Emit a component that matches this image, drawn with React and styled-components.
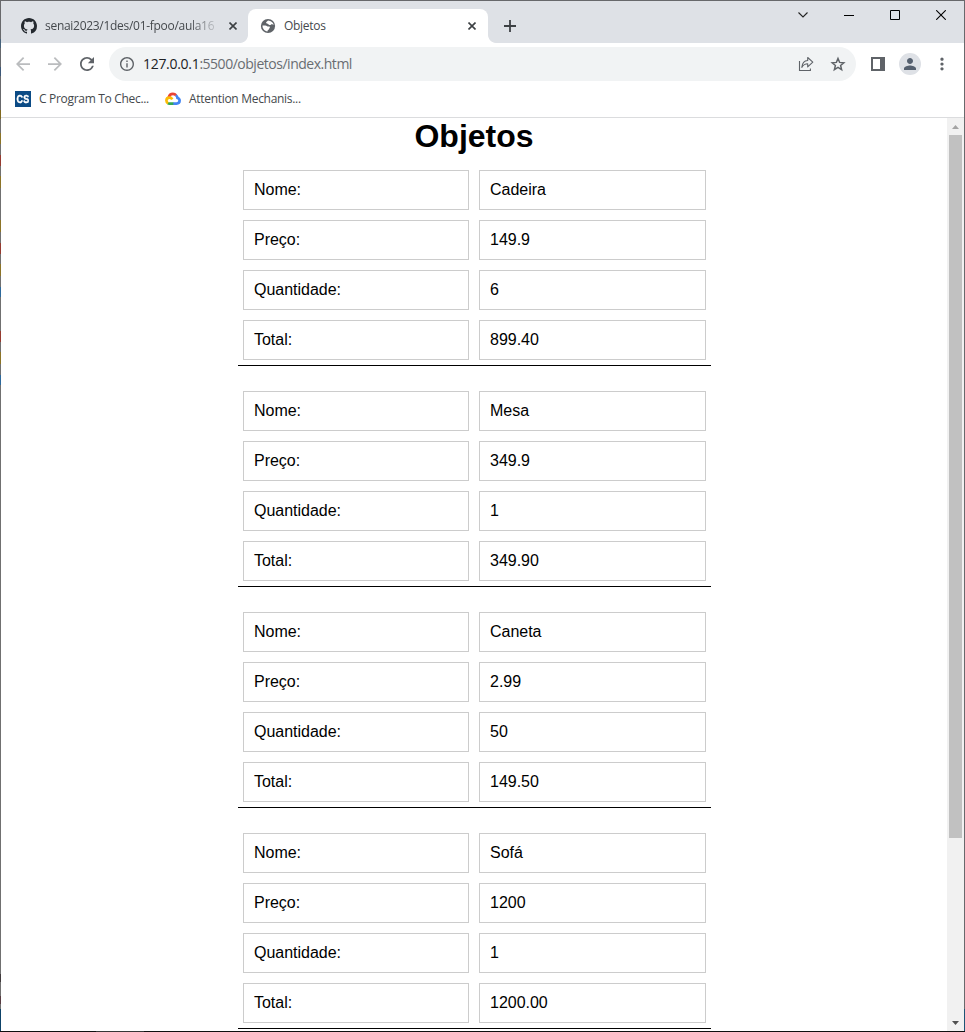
import React from "react";
import styled, { createGlobalStyle, css } from "styled-components";
import {
  MdArrowBack,
  MdArrowForward,
  MdInfoOutline,
  MdMoreVert,
  MdPerson,
  MdRefresh,
} from "react-icons/md";

const GlobalStyle = createGlobalStyle`
  * { box-sizing: border-box; }
  body { margin: 0; background: #fff; overflow: hidden; }
`;

const uiFont = css`
  font-family: "Open Sans", "Noto Sans", sans-serif;
  font-size: 12px;
  line-height: 16px;
  white-space: nowrap;
`;

const Desktop = styled.div`
  display: grid;
  grid-template-columns: 1px 1fr 1px;
  grid-template-rows: 1px 1fr 1px;
  width: 965px;
  height: 1032px;
`;

const EdgeTop = styled.div`
  grid-column: 1 / 4;
  background: #67686b;
`;

const EdgeLeft = styled.div`
  background: linear-gradient(
    #68696c 0 38px, #45617a 38px 47px, #68696c 47px 66px, #3c5878 66px 75px,
    #68696c 75px 109px, #80691f 109px 118px, #707070 118px 132px,
    #8c7427 132px 143px, #707070 143px 154px, #963b30 154px 165px,
    #707070 165px 175px, #8c7427 175px 187px, #707070 187px 219px,
    #8c7427 219px 231px, #707070 231px 242px, #963b30 242px 253px,
    #707070 253px 263px, #8c7427 263px 275px, #707070 275px 286px,
    #2d699c 286px 296px, #707070 296px 330px, #963b30 330px 341px,
    #707070 341px 351px, #8c7427 351px 363px, #707070 363px 374px,
    #2d699c 374px 384px, #707070 384px 973px, #403a3c 973px 981px,
    #707070 981px 995px, #583c42 995px 1003px, #707070 1003px 1008px,
    #0d4268 1008px 1031px
  );
`;

const EdgeRight = styled.div`
  background: linear-gradient(#68696c 0 1008px, #1d5475 1008px);
`;

const EdgeBottom = styled.div`
  grid-column: 1 / 4;
  background: linear-gradient(90deg, #101010 0 96px, #363636 96px 144px, #101010 144px);
`;

const Window = styled.div`
  display: flex;
  flex-direction: column;
  min-width: 0;
  min-height: 0;
  overflow: hidden;
`;

const TabStrip = styled.div`
  display: flex;
  height: 42px;
  background: #dee1e6;
  flex: none;
`;

const Tab = styled.div`
  ${uiFont}
  position: relative;
  display: flex;
  align-items: center;
  gap: 8px;
  height: 34px;
  margin-top: 8px;
  width: ${(p) => (p.$active ? 240 : 247)}px;
  padding-left: ${(p) => (p.$active ? 12 : 20)}px;
  padding-right: ${(p) => (p.$active ? 8 : 7)}px;
  color: #45494d;
  border-radius: 8px 8px 0 0;
  background: ${(p) => (p.$active ? "#fff" : "transparent")};
  ${(p) =>
    p.$active &&
    css`
      &::before,
      &::after {
        content: "";
        position: absolute;
        bottom: 0;
        width: 8px;
        height: 8px;
      }
      &::before {
        left: -8px;
        background: radial-gradient(circle at 0 0, transparent 7.5px, #fff 8.3px);
      }
      &::after {
        right: -8px;
        background: radial-gradient(circle at 100% 0, transparent 7.5px, #fff 8.3px);
      }
    `}
`;

const TabTitle = styled.span`
  flex: 1;
  overflow: hidden;
  letter-spacing: ${(p) => p.$spacing}px;
  ${(p) =>
    p.$fade &&
    css`
      mask-image: linear-gradient(90deg, #000 144px, transparent 176px);
    `}
`;

const Slot = styled.span`
  display: flex;
  align-items: center;
  justify-content: center;
  flex: none;
  width: ${(p) => p.$w}px;
  height: ${(p) => p.$h || p.$w}px;
  color: ${(p) => p.$color || "#5f6368"};
  svg {
    display: block;
    flex: none;
    transform: ${(p) => (p.$scale ? `scale(${p.$scale})` : "none")};
  }
`;

const WindowControls = styled.div`
  display: flex;
  margin-left: auto;
`;

const Toolbar = styled.div`
  display: flex;
  align-items: center;
  height: 42px;
  padding-left: 6px;
  flex: none;
`;

const Omnibox = styled.div`
  display: flex;
  align-items: center;
  width: 747px;
  height: 34px;
  margin: 0 6px;
  padding: 0 2px;
  border-radius: 17px;
  background: #f1f3f4;
`;

const Url = styled.span`
  ${uiFont}
  flex: 1;
  font-size: 14px;
  line-height: 20px;
  letter-spacing: -0.48px;
  color: #696d72;
  b { font-weight: 400; color: #202124; letter-spacing: -0.3px; }
`;

const Avatar = styled.span`
  display: flex;
  align-items: center;
  justify-content: center;
  width: 22px;
  height: 22px;
  border-radius: 50%;
  background: #dee1e6;
  color: #55606f;
`;

const BookmarkBar = styled.div`
  display: flex;
  align-items: center;
  gap: 16px;
  height: 33px;
  padding: 0 0 5px 14px;
  border-bottom: 1px solid #dbdcde;
  flex: none;
`;

const Bookmark = styled.div`
  ${uiFont}
  display: flex;
  align-items: center;
  gap: 8px;
  height: 28px;
  width: ${(p) => p.$w}px;
  color: #45494d;
  letter-spacing: ${(p) => p.$spacing}px;
`;

const Viewport = styled.div`
  display: flex;
  flex: 1;
  min-height: 0;
`;

const Page = styled.main`
  flex: 1;
  overflow: hidden;
  font-family: Arial, "Liberation Sans", sans-serif;
  font-size: 16px;
  color: #000;
`;

const Title = styled.h1`
  margin: 0 0 10px;
  font-size: 32px;
  line-height: 37px;
  text-align: center;
`;

const Card = styled.section`
  display: grid;
  grid-template-columns: 226px 227px;
  gap: 10px;
  width: 473px;
  margin: 0 auto 20px 237px;
  padding: 5px;
  border-bottom: 1px solid #000;
`;

const Cell = styled.div`
  height: 40px;
  padding: 10px;
  border: 1px solid #ccc;
  line-height: 18px;
  letter-spacing: -0.02px;
`;

const Scrollbar = styled.div`
  display: flex;
  flex-direction: column;
  align-items: center;
  width: 17px;
  padding-right: 1px;
  background: #f1f1f1;
`;

const Thumb = styled.div`
  width: 13px;
  height: 703px;
  margin-bottom: auto;
  background: #c1c1c1;
`;

const Svg = ({ w, h = w, children, ...rest }) => (
  <svg width={w} height={h} viewBox={`0 0 ${w} ${h}`} fill="none" {...rest}>
    {children}
  </svg>
);

const GithubMark = () => (
  <Svg w={16}>
    <path
      fill="#24292f"
      d="M8 0C3.58 0 0 3.58 0 8c0 3.54 2.29 6.53 5.47 7.59.4.07.55-.17.55-.38 0-.19-.01-.82-.01-1.49-2.01.37-2.53-.49-2.69-.94-.09-.23-.48-.94-.82-1.13-.28-.15-.68-.52-.01-.53.63-.01 1.08.58 1.23.82.72 1.21 1.87.87 2.33.66.07-.52.28-.87.51-1.07-1.78-.2-3.64-.89-3.64-3.95 0-.87.31-1.59.82-2.15-.08-.2-.36-1.02.08-2.12 0 0 .67-.21 2.2.82.64-.18 1.32-.27 2-.27s1.36.09 2 .27c1.53-1.04 2.2-.82 2.2-.82.44 1.1.16 1.92.08 2.12.51.56.82 1.27.82 2.15 0 3.07-1.87 3.75-3.65 3.95.29.25.54.73.54 1.48 0 1.07-.01 1.93-.01 2.2 0 .21.15.46.55.38A8.01 8.01 0 0 0 16 8c0-4.42-3.58-8-8-8z"
    />
  </Svg>
);

const GlobeIcon = () => (
  <Svg w={16}>
    <circle cx="8" cy="8" r="7.100" fill="#5f6368" />
    <path
      fill="#fff"
      d="M8 2.600c-.4.9-1.700 1-1.900 2-.2.8.7 1 1.500 1.100 1 .1.900 1.200 1.900 1.300 1.300.2 1.500-.9 2.600-.7.7.1 1.100.5 1.600.7C13.300 4.700 11.200 2.700 8 2.600zM2.500 7.500c-.2 3 2 5.600 5 6 .1-.9.200-1.300 1-1.700.9-.5.600-1.500 1.200-2 .5-.4.300-1.100-.4-1.200-1-.1-1.500.200-2.200-.4C6.200 7.400 4.800 7.600 2.500 7.500z"
    />
  </Svg>
);

const CloseIcon = () => (
  <Svg w={8}>
    <path d="M.5.500l7 7M7.500.500l-7 7" stroke="#3c4043" strokeWidth="1.6" />
  </Svg>
);

const PlusIcon = () => (
  <Svg w={12}>
    <path d="M6 0v12M0 6h12" stroke="#3c4043" strokeWidth="1.8" />
  </Svg>
);

const ShareIcon = () => (
  <Svg w={16} stroke="#5f6368" strokeWidth="1.1">
    <path d="M1.500 5v9.500h10.900v-2" />
    <path
      d="M3.800 11.400C4.200 7.300 6.300 4.700 9.700 4.500V1.500l5.100 4.700-5.100 4.700V7.800C7 7.800 5.300 8.900 3.800 11.400z"
      strokeLinejoin="round"
    />
  </Svg>
);

const StarIcon = () => (
  <Svg w={16} stroke="#5f6368" strokeWidth="1.5">
    <path d="M8 2.500l1.600 3.900 4.200.4-3.200 2.700 1 4.100L8 11.400l-3.600 2.200 1-4.100-3.200-2.700 4.200-.4z" />
  </Svg>
);

const PanelIcon = () => (
  <Svg w={14}>
    <path fillRule="evenodd" fill="#5f6368" d="M0 0h14v14H0zM2 2v10h7V2z" />
  </Svg>
);

const CloudIcon = () => (
  <Svg w={16} strokeWidth="2.7">
    <path d="M3.800 6.300C4.400 3.900 6 2.900 7.900 2.900c1.300 0 2.400.5 3.200 1.500" stroke="#ea4335" />
    <path d="M10.900 4.200c1 .8 1.500 1.700 1.600 2.800 1.400.4 2.100 1.300 2.100 2.600 0 1.900-1.400 3-3.100 3H8" stroke="#4285f4" />
    <path d="M8.300 12.600H4.600c-.8 0-1.400-.2-1.900-.6" stroke="#34a853" />
    <path d="M3.100 12.300C1.900 11.700 1.400 10.800 1.400 9.600c0-1.800 1.400-3 3.100-3 1.300 0 2.200.6 2.800 1.700" stroke="#fbbc05" />
  </Svg>
);

const CsBadge = styled.span`
  display: flex;
  align-items: center;
  justify-content: center;
  flex: none;
  width: 16px;
  height: 16px;
  background: #0b4b85;
  color: #fff;
  font: 700 9px/16px "Liberation Sans", sans-serif;
  letter-spacing: 0.3px;
  -webkit-text-stroke: 0.3px #fff;
  span { transform: scaleY(1.25); }
`;

const ScrollArrow = ({ down }) => (
  <Svg w={7} h={4}>
    <path d={down ? "M0 0h7L3.500 4z" : "M0 4h7L3.500 0z"} fill={down ? "#505050" : "#a3a3a3"} />
  </Svg>
);

const items = [
  { nome: "Cadeira", preco: 149.9, quantidade: 6 },
  { nome: "Mesa", preco: 349.9, quantidade: 1 },
  { nome: "Caneta", preco: 2.99, quantidade: 50 },
  { nome: "Sofá", preco: 1200, quantidade: 1 },
];

export default function App() {
  return (
    <Desktop>
      <GlobalStyle />
      <EdgeTop />
      <EdgeLeft />
      <Window>
        <TabStrip>
          <Tab>
            <Slot $w={16}><GithubMark /></Slot>
            <TabTitle $fade $spacing={-0.29}>senai2023/1des/01-fpoo/aula16</TabTitle>
            <Slot $w={16}><CloseIcon /></Slot>
          </Tab>
          <Tab $active>
            <Slot $w={16}><GlobeIcon /></Slot>
            <TabTitle $spacing={-0.29}>Objetos</TabTitle>
            <Slot $w={16}><CloseIcon /></Slot>
          </Tab>
          <Slot $w={44} $h={50}><PlusIcon /></Slot>
          <WindowControls>
            <Slot $w={46} $h={28}>
              <Svg w={10} h={6}><path d="M.5.500l4.500 4.500 4.500-4.500" stroke="#222" strokeWidth="1.1" /></Svg>
            </Slot>
            <Slot $w={46} $h={29}>
              <Svg w={10} h={1}><path d="M0 .5h10" stroke="#000" /></Svg>
            </Slot>
            <Slot $w={46} $h={28}>
              <Svg w={10}><path d="M.5.5h9v9h-9z" stroke="#000" /></Svg>
            </Slot>
            <Slot $w={46} $h={28}>
              <Svg w={10}><path d="M.2.2l9.600 9.600M9.800.2L.2 9.800" stroke="#000" strokeWidth="1.1" /></Svg>
            </Slot>
          </WindowControls>
        </TabStrip>

        <Toolbar>
          <Slot $w={32} $scale={1.05} $color="#babcbe"><MdArrowBack size={20} /></Slot>
          <Slot $w={32} $scale={1.05} $color="#babcbe"><MdArrowForward size={20} /></Slot>
          <Slot $w={32} $scale={1.05}><MdRefresh size={20} /></Slot>
          <Omnibox>
            <Slot $w={32} $scale={1.05}><MdInfoOutline size={16} /></Slot>
            <Url><b>127.0.0.1</b>:5500/objetos/index.html</Url>
            <Slot $w={32}><ShareIcon /></Slot>
            <Slot $w={32}><StarIcon /></Slot>
          </Omnibox>
          <Slot $w={32}><PanelIcon /></Slot>
          <Slot $w={32}><Avatar><MdPerson size={18} /></Avatar></Slot>
          <Slot $w={32} $scale={0.97}><MdMoreVert size={20} /></Slot>
        </Toolbar>

        <BookmarkBar>
          <Bookmark $w={134} $spacing={-0.31}>
            <CsBadge><span>CS</span></CsBadge>
            C Program To Chec...
          </Bookmark>
          <Bookmark $w={140} $spacing={-0.3}>
            <Slot $w={16}><CloudIcon /></Slot>
            Attention Mechanis...
          </Bookmark>
        </BookmarkBar>

        <Viewport>
          <Page>
            <Title>Objetos</Title>
            {items.map((item) => (
              <Card key={item.nome}>
                <Cell>Nome:</Cell>
                <Cell>{item.nome}</Cell>
                <Cell>Preço:</Cell>
                <Cell>{item.preco}</Cell>
                <Cell>Quantidade:</Cell>
                <Cell>{item.quantidade}</Cell>
                <Cell>Total:</Cell>
                <Cell>{(item.preco * item.quantidade).toFixed(2)}</Cell>
              </Card>
            ))}
          </Page>
          <Scrollbar>
            <Slot $w={17} $h={17}><ScrollArrow /></Slot>
            <Thumb />
            <Slot $w={17} $h={17}><ScrollArrow down /></Slot>
          </Scrollbar>
        </Viewport>
      </Window>
      <EdgeRight />
      <EdgeBottom />
    </Desktop>
  );
}
